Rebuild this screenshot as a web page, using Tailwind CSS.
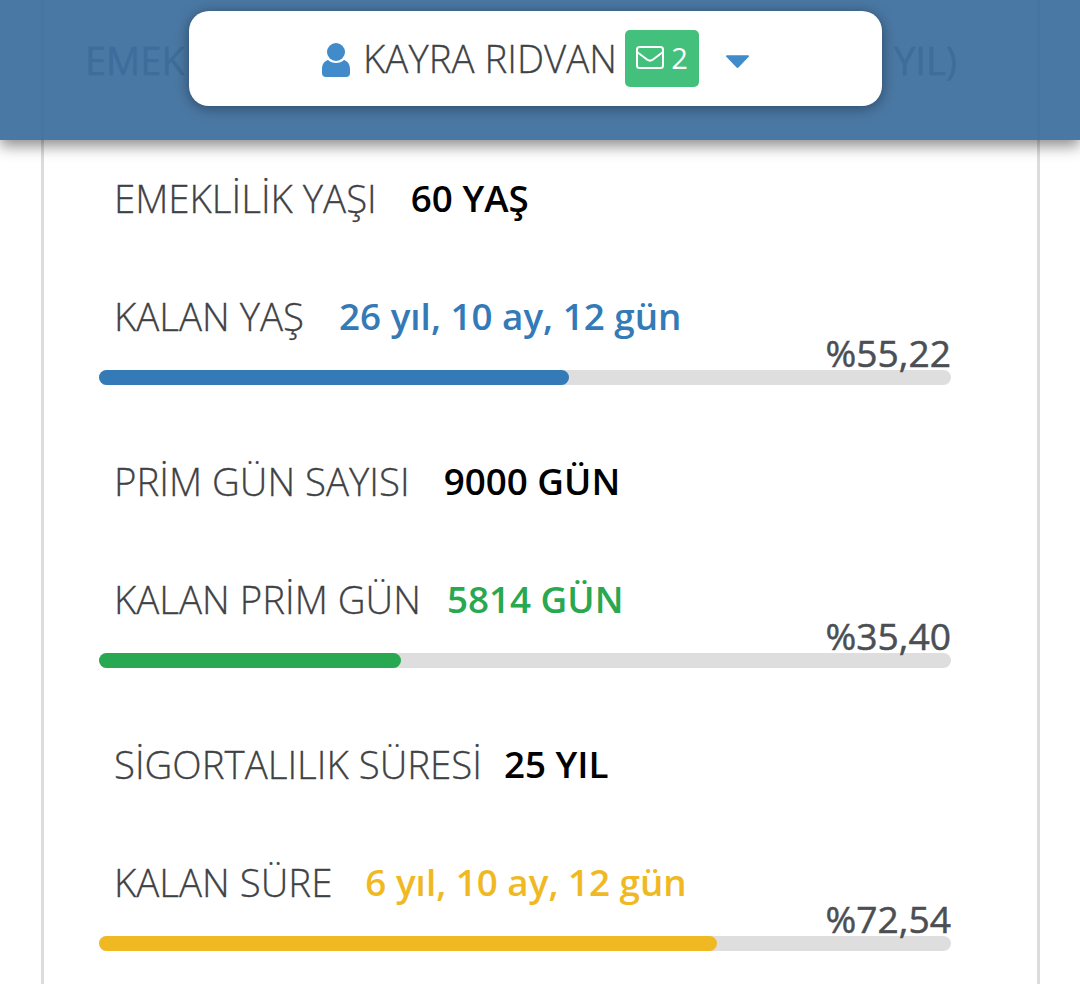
<!DOCTYPE html>
<html lang="en">
<head>
  <meta charset="UTF-8" />
  <title>Emeklilik</title>
  <script src="https://cdn.jsdelivr.net/npm/@tailwindcss/browser@4"></script>
</head>
<body class="bg-white font-['Open_Sans',sans-serif]">
  <div class="relative h-[984px] w-[1080px] overflow-hidden">

    <!-- top bar, sits over the card -->
    <div class="absolute inset-x-0 top-0 z-10 flex h-[140px] items-center justify-between pb-[20px] pl-[85px] pr-[123px] bg-[#36699a]/90 shadow-[0_6px_14px_rgba(0,0,0,0.45)]">
      <span class="text-[38px] text-[#3d6d9a] [-webkit-text-stroke:0.4px_#3d6d9a]">EMEK</span>
      <span class="text-[38px] text-[#3d6d9a] [-webkit-text-stroke:0.4px_#3d6d9a]">YIL)</span>
    </div>

    <!-- user pill -->
    <div class="absolute left-[189px] top-[11px] z-20 flex h-[95px] w-[693px] items-center justify-center rounded-[20px] bg-white shadow-[0_2px_14px_rgba(0,0,0,0.4)]">
      <svg class="mr-[13px] mt-[3px] h-[34px] w-[28px]" viewBox="0 0 28 34" fill="#428bca">
        <circle cx="14" cy="9" r="9" />
        <path d="M6 17C2.500 18 0 21 0 26v4a4 4 0 0 0 4 4h20a4 4 0 0 0 4-4v-4c0-5-2.500-8-6-9-2 2-5 3-8 3s-6-1-8-3z" />
      </svg>
      <span class="text-[38.400px] font-light text-[#3f4245] [-webkit-text-stroke:0.3px_#3f4245]">KAYRA RIDVAN</span>
      <span class="ml-[8px] flex h-[57px] w-[74px] items-center justify-center gap-[7px] rounded-[5px] bg-[#43c17c] pb-[2px] text-white">
        <svg class="h-[23px] w-[28px]" viewBox="0 0 28 23" fill="none" stroke="white" stroke-width="2">
          <rect x="1" y="1" width="26" height="21" rx="2.500" />
          <path d="M1 6l10 7.500c2 1.500 4 1.500 6 0L27 6" />
        </svg>
        <span class="text-[29px] leading-none">2</span>
      </span>
      <svg class="ml-[27px] mt-[6px] h-[14px] w-[23px]" viewBox="0 0 24 14" fill="#428bca"><path d="M1 0h22c1 0 1.300.8.700 1.500L13 12.800c-.6.6-1.400.6-2 0L.3 1.500C-.3.8 0 0 1 0z" /></svg>
    </div>

    <!-- card -->
    <div class="ml-[41px] h-full w-[999px] border-x-[3px] border-[#dcdcdc] pl-[55px] pr-[86px] pt-[175px]">

      <div class="h-[283px]">
        <div class="flex h-[48px] items-center pl-[15px]">
          <span class="text-[38.400px] font-light text-[#3f4245] [-webkit-text-stroke:0.3px_#3f4245]">EMEKLİLİK YAŞI</span>
          <span class="ml-[34px] text-[36.800px] font-semibold text-black">60 YAŞ</span>
        </div>
        <div class="mt-[70px] flex h-[48px] items-center pl-[15px]">
          <span class="text-[38.400px] font-light text-[#3f4245] [-webkit-text-stroke:0.3px_#3f4245]">KALAN YAŞ</span>
          <span class="ml-[35px] text-[36.800px] font-semibold text-[#337ab7]">26 yıl, 10 ay, 12 gün</span>
        </div>
        <div class="relative mt-[29px] h-[15px] rounded-full bg-[#dedede]">
          <div class="h-full rounded-full bg-[#337ab7]" style="width: 55.22%"></div>
          <span class="absolute bottom-[10px] right-0 text-[37.200px] leading-[44px] text-[#4b4f54] [-webkit-text-stroke:0.5px_#4b4f54]">%55,22</span>
        </div>
      </div>

      <div class="h-[283px]">
        <div class="flex h-[48px] items-center pl-[15px]">
          <span class="text-[38.400px] font-light text-[#3f4245] [-webkit-text-stroke:0.3px_#3f4245]">PRİM GÜN SAYISI</span>
          <span class="ml-[34px] text-[36.800px] font-semibold text-black">9000 GÜN</span>
        </div>
        <div class="mt-[70px] flex h-[48px] items-center pl-[15px]">
          <span class="text-[38.400px] font-light text-[#3f4245] [-webkit-text-stroke:0.3px_#3f4245]">KALAN PRİM GÜN</span>
          <span class="ml-[26px] text-[36.800px] font-semibold text-[#28a850]">5814 GÜN</span>
        </div>
        <div class="relative mt-[29px] h-[15px] rounded-full bg-[#dedede]">
          <div class="h-full rounded-full bg-[#28a850]" style="width: 35.4%"></div>
          <span class="absolute bottom-[10px] right-0 text-[37.200px] leading-[44px] text-[#4b4f54] [-webkit-text-stroke:0.5px_#4b4f54]">%35,40</span>
        </div>
      </div>

      <div class="h-[283px]">
        <div class="flex h-[48px] items-center pl-[15px]">
          <span class="text-[38.400px] font-light text-[#3f4245] [-webkit-text-stroke:0.3px_#3f4245]">SİGORTALILIK SÜRESİ</span>
          <span class="ml-[22px] text-[36.800px] font-semibold text-black">25 YIL</span>
        </div>
        <div class="mt-[70px] flex h-[48px] items-center pl-[15px]">
          <span class="text-[38.400px] font-light text-[#3f4245] [-webkit-text-stroke:0.3px_#3f4245]">KALAN SÜRE</span>
          <span class="ml-[33px] text-[36.800px] font-semibold text-[#f0b924]">6 yıl, 10 ay, 12 gün</span>
        </div>
        <div class="relative mt-[29px] h-[15px] rounded-full bg-[#dedede]">
          <div class="h-full rounded-full bg-[#f0b924]" style="width: 72.54%"></div>
          <span class="absolute bottom-[10px] right-0 text-[37.200px] leading-[44px] text-[#4b4f54] [-webkit-text-stroke:0.5px_#4b4f54]">%72,54</span>
        </div>
      </div>

    </div>
  </div>
</body>
</html>
